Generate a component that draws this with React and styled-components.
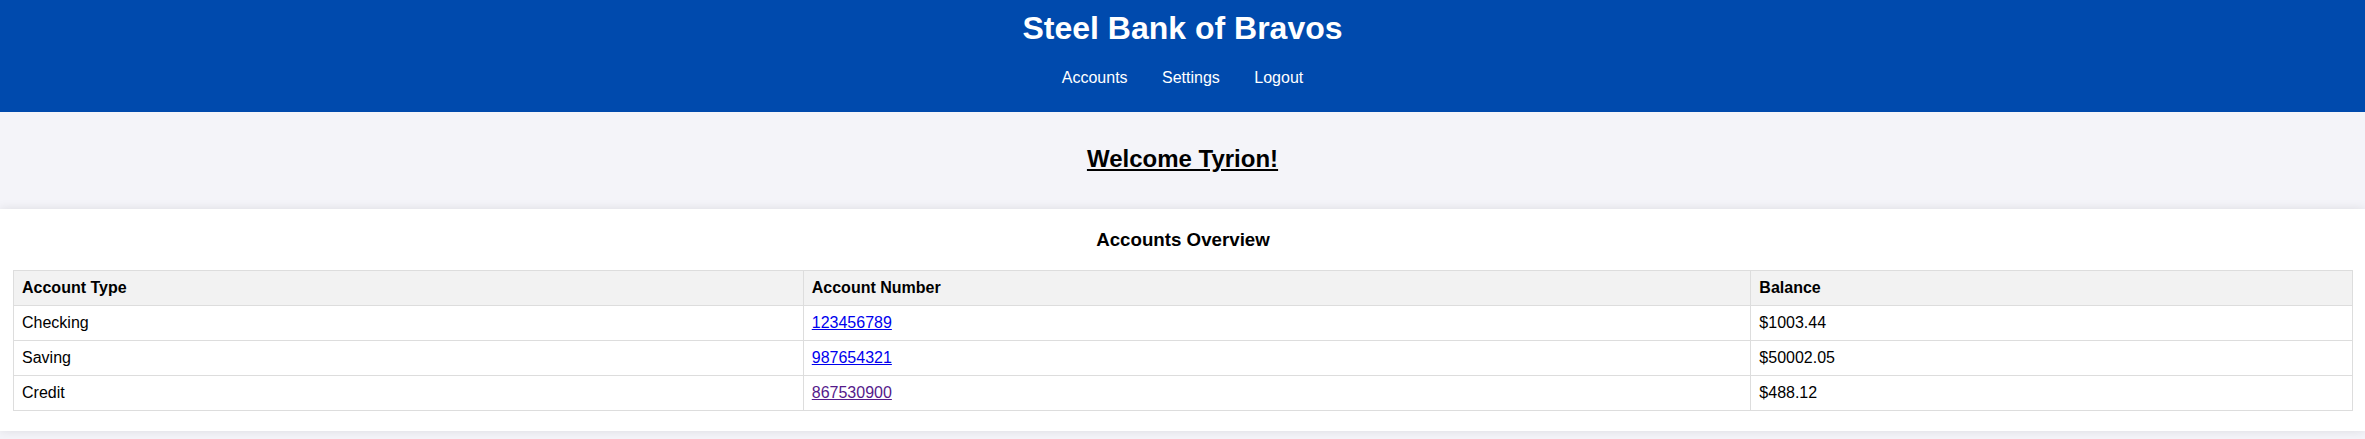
import React from 'react';
import styled, { createGlobalStyle } from 'styled-components';

const GlobalStyle = createGlobalStyle`
  body {
    margin: 0;
    font-family: 'Liberation Sans', Arial, sans-serif;
    background: #f4f4f9;
    color: #000;
  }
`;

const accounts = [
  { type: 'Checking', number: '123456789', balance: '$1003.44' },
  { type: 'Saving', number: '987654321', balance: '$50002.05' },
  { type: 'Credit', number: '867530900', balance: '$488.12', visited: true },
];

function App() {
  return (
    <>
      <GlobalStyle />
      <Header>
        <Title>Steel Bank of Bravos</Title>
        <Nav>
          <NavLink href="#accounts">Accounts</NavLink>{' '}
          <NavLink href="#settings">Settings</NavLink>{' '}
          <NavLink href="#logout">Logout</NavLink>
        </Nav>
      </Header>

      <Welcome>
        <h2>Welcome Tyrion!</h2>
      </Welcome>

      <Card>
        <h3>Accounts Overview</h3>
        <Table>
          <thead>
            <tr>
              <th>Account Type</th>
              <th>Account Number</th>
              <th>Balance</th>
            </tr>
          </thead>
          <tbody>
            {accounts.map((a) => (
              <tr key={a.number}>
                <td>{a.type}</td>
                <td>
                  <AccountLink href={`#${a.number}`} $visited={a.visited}>
                    {a.number}
                  </AccountLink>
                </td>
                <td>{a.balance}</td>
              </tr>
            ))}
          </tbody>
        </Table>
      </Card>
      <Footer />
    </>
  );
}

const Header = styled.header`
  background: #004aad;
  color: #fff;
  text-align: center;
  padding: 10px 0 25px;
`;

const Title = styled.h1`
  margin: 0;
  font-size: 32px;
  font-weight: bold;
`;

const Nav = styled.nav`
  margin-top: 22px;
  font-size: 16px;
`;

const NavLink = styled.a`
  color: #fff;
  text-decoration: none;
  margin: 0 15px;
`;

const Welcome = styled.section`
  padding: 13px 15px 16px;
  text-align: center;

  h2 {
    margin: 0.83em 0;
    font-size: 24px;
    text-decoration: underline;
  }
`;

const Card = styled.section`
  background: #fff;
  padding: 20px 12px 20px 13px;
  box-shadow: 0 0 10px rgba(0, 0, 0, 0.1);

  h3 {
    margin: 0 0 1em;
    font-size: 1.17em;
    text-align: center;
  }
`;

const Table = styled.table`
  width: 100%;
  border-collapse: collapse;
  font-size: 16px;

  th,
  td {
    border: 1px solid #ddd;
    padding: 8px;
    text-align: left;
  }

  th {
    background: #f2f2f2;
    font-weight: bold;
  }
`;

const AccountLink = styled.a`
  color: ${(p) => (p.$visited ? '#551a8b' : '#0000ee')};
  text-decoration: underline;
`;

const Footer = styled.div`
  height: 8px;
`;

export default App;
